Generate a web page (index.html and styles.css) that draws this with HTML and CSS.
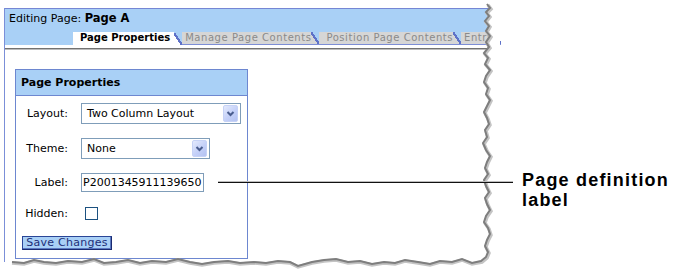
FILE: index.html
```html
<!DOCTYPE html>
<html lang="en">

<head>
  <meta charset="UTF-8">
  <meta name="viewport" content="width=device-width, initial-scale=1.0">
  <title>Page Properties</title>
  <link rel="stylesheet" href="styles.css">
</head>

<body>

  <div class="figure">
    <div class="shot">
      <div class="frame">
        <div class="header">
          <div class="title">Editing Page: <b>Page A</b></div>
          <ul class="tabs">
            <li class="tab active">Page Properties</li>
            <li class="tab first">Manage Page Contents</li>
            <li class="tab">Position Page Contents</li>
            <li class="tab first">Entry</li>
          </ul>
        </div>
        <div class="rule"></div>

        <div class="content">
          <div class="panel">
            <div class="panel-head">Page Properties</div>
            <div class="panel-body">
              <div class="row">
                <label>Layout:</label>
                <div class="select wide">
                  <span>Two Column Layout</span>
                  <span class="arrow">
                    <svg width="13" height="15" viewBox="0 0 13 15"><polyline points="3.5,6 6.5,9 9.5,6" fill="none" stroke="#4a5d8e" stroke-width="2"/></svg>
                  </span>
                </div>
              </div>
              <div class="row">
                <label>Theme:</label>
                <div class="select narrow">
                  <span>None</span>
                  <span class="arrow">
                    <svg width="13" height="15" viewBox="0 0 13 15"><polyline points="3.5,6 6.5,9 9.5,6" fill="none" stroke="#4a5d8e" stroke-width="2"/></svg>
                  </span>
                </div>
              </div>
              <div class="row r3">
                <label>Label:</label>
                <input class="text" type="text" value="P2001345911139650">
              </div>
              <div class="row r4">
                <label>Hidden:</label>
                <input class="check" type="checkbox">
              </div>
              <button class="save">Save Changes</button>
            </div>
          </div>
        </div>
      </div>
    </div>

    <div class="note">Page definition<br>label</div>

    <!-- torn paper edge round the screenshot -->
    <svg class="torn" width="676" height="276" viewBox="0 0 676 276">
      <path fill="#fff" d="M500,0 L487,0 L487,4 L490,8 L486,12 L489,16 L485,21 L489,26 L486,31 L490,36 L486,42 L489,47 L484,53 L488,58 L485,64 L490,70 L486,76 L484,82 L488,88 L486,94 L490,100 L487,106 L484,112 L487,118 L489,124 L485,130 L487,137 L483,143 L486,150 L490,156 L487,162 L485,168 L488,174 L484,180 L486,186 L489,192 L485,198 L487,204 L490,210 L486,216 L484,222 L488,228 L490,234 L487,240 L485,246 L488,252 L486,257 L481,261 L472,263 L462,259 L452,262 L440,261 L430,264 L418,262 L405,260 L395,263 L384,262 L372,264 L360,261 L348,262 L336,259 L324,260 L312,262 L298,266 L290,262 L278,261 L266,263 L254,262 L240,263 L228,261 L214,262 L202,264 L190,262 L178,259 L166,262 L152,261 L140,263 L128,260 L116,262 L104,263 L94,259 L82,262 L68,261 L56,263 L44,262 L34,260 L24,263 L12,262 L0,263 L0,276 L500,276 Z"/>
      <path class="edge-light" d="M488,5 L491,9 L487,13 L490,17 L486,22 L490,27 L487,32 L491,37 L487,43 L490,48 L485,54 L489,59 L486,65 L491,71 L487,77 L485,83 L489,89 L487,95 L491,101 L488,107 L485,113 L488,119 L490,125 L486,131 L488,138 L484,144 L487,151 L491,157 L488,163 L486,169 L489,175 L485,181 L487,187 L490,193 L486,199 L488,205 L491,211 L487,217 L485,223 L489,229 L491,235 L488,241 L486,247 L489,253 L487,258 L482,262 L472,264 L462,260 L452,263 L440,262 L430,265 L418,263 L405,261 L395,264 L384,263 L372,265 L360,262 L348,263 L336,260 L324,261 L312,263 L298,267 L290,263 L278,262 L266,264 L254,263 L240,264 L228,262 L214,263 L202,265 L190,263 L178,260 L166,263 L152,262 L140,264 L128,261 L116,263 L104,264 L94,260 L82,263 L68,262 L56,264 L44,263 L34,261 L24,264 L12,263"/>
      <path class="edge-dark" d="M487,4 L490,8 L486,12 L489,16 L485,21 L489,26 L486,31 L490,36 L486,42 L489,47 L484,53 L488,58 L485,64 L490,70 L486,76 L484,82 L488,88 L486,94 L490,100 L487,106 L484,112 L487,118 L489,124 L485,130 L487,137 L483,143 L486,150 L490,156 L487,162 L485,168 L488,174 L484,180 L486,186 L489,192 L485,198 L487,204 L490,210 L486,216 L484,222 L488,228 L490,234 L487,240 L485,246 L488,252 L486,257 L481,261 L472,263 L462,259 L452,262 L440,261 L430,264 L418,262 L405,260 L395,263 L384,262 L372,264 L360,261 L348,262 L336,259 L324,260 L312,262 L298,266 L290,262 L278,261 L266,263 L254,262 L240,263 L228,261 L214,262 L202,264 L190,262 L178,259 L166,262 L152,261 L140,263 L128,260 L116,262 L104,263 L94,259 L82,262 L68,261 L56,263 L44,262 L34,260 L24,263 L12,262"/>
    </svg>

    <div class="pointer"></div>
  </div>

</body>

</html>
```

FILE: styles.css
```css
html,
body {
  margin: 0;
  padding: 0;
}

body {
  background: #fff;
  color: #000;
  font-family: "DejaVu Sans", Verdana, sans-serif;
  font-size: 11px;
}

ul,
li {
  list-style: none;
  margin: 0;
  padding: 0;
}

.figure {
  position: relative;
  display: flex;
  width: 676px;
  height: 276px;
  overflow: hidden;
}

/* screenshot */
.shot {
  flex: none;
  width: 496px;
  box-sizing: border-box;
  padding: 8px 0 0 4px;
}

.frame {
  height: 254px;
  border-left: 1px solid #7b8fd8;
}

.header {
  background: #a9d0f6;
  border-top: 1px solid #7586d4;
}

.title {
  height: 23px;
  box-sizing: border-box;
  padding: 3px 0 0 4px;
  line-height: 13px;
}

.title b {
  font-size: 11.5px;
}

.tabs {
  display: flex;
  padding-left: 68px;
  height: 13px;
}

.tab {
  height: 12px;
  line-height: 12px;
  padding: 0 8px 0 7px;
  font-size: 10px;
  letter-spacing: 0.55px;
  color: #8a8a8a;
  white-space: nowrap;
  border-bottom: 1px solid #7d8ed6;
  background:
    linear-gradient(to bottom left, transparent 42%, #5f72c8 42%, #5f72c8 58%, #d6d6d6 58%) right / 8px 100% no-repeat,
    linear-gradient(#d6d6d6, #d6d6d6) left / calc(100% - 8px) 100% no-repeat;
}

.tab.first {
  padding-left: 3px;
}

.tab.active {
  height: 13px;
  padding: 0 12px 0 7px;
  border-bottom: 0;
  color: #000;
  font-weight: bold;
  letter-spacing: 0;
  background:
    linear-gradient(to bottom left, transparent 42%, #5f72c8 42%, #5f72c8 58%, #fff 58%) right / 8px 12px no-repeat,
    linear-gradient(#fff, #fff) left / calc(100% - 8px) 100% no-repeat,
    linear-gradient(#fff, #fff) left bottom / 100% 1px no-repeat;
}

.rule {
  margin-top: 3px;
  height: 0;
  border-top: 1px solid #727272;
  border-bottom: 1px solid #bcbcbc;
}

.content {
  padding: 19px 0 0 10px;
}

/* Page Properties panel */
.panel {
  width: 233px;
  box-sizing: border-box;
  border: 1px solid #6d87d0;
}

.panel-head {
  height: 26px;
  box-sizing: border-box;
  padding-left: 5px;
  line-height: 25px;
  font-weight: bold;
  background: #a9d0f6;
  border-bottom: 1px solid #6d87d0;
}

.panel-body {
  padding: 7px 0 8px 0;
}

.row {
  display: flex;
  align-items: center;
  margin-bottom: 14px;
}

.row.r3 {
  margin-bottom: 15px;
}

.row.r4 {
  margin-bottom: 16px;
}

.row label {
  width: 52px;
  margin-right: 13px;
  text-align: right;
}

.select {
  display: flex;
  align-items: center;
  height: 21px;
  box-sizing: border-box;
  padding-left: 5px;
  border: 1px solid #7f9db9;
}

.select.wide {
  width: 160px;
}

.select.narrow {
  width: 129px;
}

.arrow {
  margin-left: auto;
  margin-right: 2px;
  width: 13px;
  height: 15px;
  border: 1px solid #c6d2f6;
  border-radius: 2px;
  background: linear-gradient(135deg, #e4eafd 0%, #c4d0f8 55%, #b4c2f2 100%);
}

.arrow svg {
  display: block;
}

.text {
  width: 123px;
  height: 19px;
  box-sizing: border-box;
  margin: 0;
  padding: 0 0 0 1px;
  border: 1px solid #7f9db9;
  font-family: "DejaVu Sans", Verdana, sans-serif;
  font-size: 11px;
  color: #000;
  outline: none;
}

.check {
  appearance: none;
  width: 13px;
  height: 13px;
  margin: 0 0 0 4px;
  box-sizing: border-box;
  border: 1px solid #1c5180;
  background: #fff;
}

.save {
  display: block;
  width: 90px;
  height: 14px;
  margin: 0 0 0 6px;
  padding: 0;
  box-sizing: border-box;
  background: #a9d0f6;
  border: 1px solid #2a4596;
  border-right-color: #1a2a70;
  border-bottom-color: #1a2a70;
  box-shadow: inset -1px -1px 0 #5a78c0;
  color: #1e2f78;
  font-family: "DejaVu Sans", Verdana, sans-serif;
  font-size: 11px;
  line-height: 12px;
  letter-spacing: 0.25px;
}

/* torn edge drawn over the screenshot */
.torn {
  position: absolute;
  left: 0;
  top: 0;
  pointer-events: none;
}

.edge-light {
  fill: none;
  stroke: #c4c4c4;
  stroke-width: 3.5;
}

.edge-dark {
  fill: none;
  stroke: #7e7e7e;
  stroke-width: 2;
}

/* callout */
.note {
  margin: 170px 0 0 26px;
  font-family: "Liberation Sans", Arial, sans-serif;
  font-size: 18px;
  font-weight: bold;
  line-height: 20px;
  letter-spacing: 1.2px;
  white-space: nowrap;
}

.pointer {
  position: absolute;
  left: 218px;
  top: 181px;
  width: 295px;
  border-top: 1px solid #bdbdbd;
  border-bottom: 1px solid #111;
}
```
